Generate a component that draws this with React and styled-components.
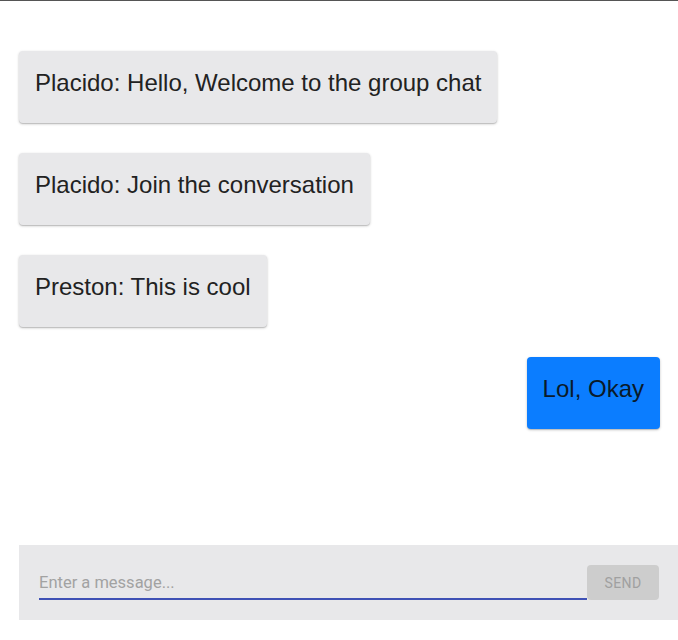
import React from "react";
import styled, { createGlobalStyle } from "styled-components";

const Global = createGlobalStyle`
  html, body { margin: 0; padding: 0; background: #fff; }
  body { font-family: "Liberation Sans", Arial, sans-serif; }
`;

const Page = styled.div`
  border-top: 1px solid #555;
  width: 678px;
  height: 639px;
  display: flex;
  flex-direction: column;
`;

const MessageList = styled.div`
  display: flex;
  flex-direction: column;
  gap: 30px;
  padding: 50px 18px 0 19px;
  height: 544px;
  flex-shrink: 0;
  box-sizing: border-box;
`;

const Bubble = styled.div`
  align-self: ${(p) => (p.$mine ? "flex-end" : "flex-start")};
  background: ${(p) => (p.$mine ? "#0b7dff" : "#e8e8ea")};
  color: ${(p) => (p.$mine ? "#0a1a2a" : "#222")};
  font-size: 24px;
  line-height: 28px;
  padding: 18px 16px 26px;
  border-radius: 4px;
  box-shadow: 0 1px 3px rgba(0,0,0,0.2), 0 1px 1px rgba(0,0,0,0.14);
`;

const InputBar = styled.form`
  margin-left: 19px;
  height: 75px;
  flex-shrink: 0;
  box-sizing: border-box;
  background: #e8e8ea;
  display: flex;
  align-items: flex-end;
  padding: 0 19px 20px 20px;
`;

const TextInput = styled.input`
  flex: 1;
  height: 35px;
  box-sizing: border-box;
  border: none;
  border-bottom: 2px solid #3f51b5;
  background: transparent;
  font-family: "Roboto", "Liberation Sans", sans-serif;
  font-size: 16.5px;
  padding: 6px 0 5px;
  outline: none;
  color: #222;
  &::placeholder { color: #a2a2a2; }
`;

const SendButton = styled.button`
  width: 72px;
  height: 35px;
  border: none;
  border-radius: 4px;
  background: #cdcdcd;
  color: #a0a0a0;
  font-family: "Roboto", "Liberation Sans", sans-serif;
  font-size: 14px;
  letter-spacing: 0.4px;
  text-transform: uppercase;
`;

const messages = [
  { text: "Placido: Hello, Welcome to the group chat" },
  { text: "Placido: Join the conversation" },
  { text: "Preston: This is cool" },
  { text: "Lol, Okay", mine: true },
];

export default function App() {
  return (
    <>
      <Global />
      <Page>
        <MessageList>
          {messages.map((m, i) => (
            <Bubble key={i} $mine={m.mine}>{m.text}</Bubble>
          ))}
        </MessageList>
        <InputBar onSubmit={(e) => e.preventDefault()}>
          <TextInput placeholder="Enter a message..." />
          <SendButton type="submit" disabled>Send</SendButton>
        </InputBar>
      </Page>
    </>
  );
}
